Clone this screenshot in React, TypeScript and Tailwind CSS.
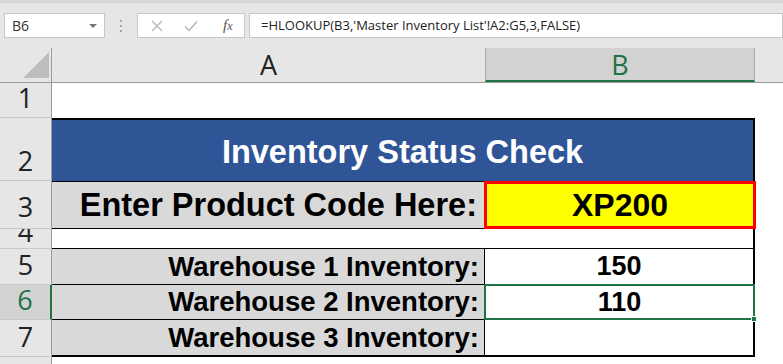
import React from "react";

const sans = { fontFamily: '"Liberation Sans", Arial, sans-serif' };

function RowHead({ n, active, pb = "pb-[6px]", clip }: { n: number; active?: boolean; pb?: string; clip?: boolean }) {
    return (
        <div
            className={`w-[52px] shrink-0 flex items-end justify-center border-b border-[#c8c8c8] ${clip ? "overflow-hidden" : ""} ${pb} ${active
                ? "bg-[#d2d2d2] text-[#217346] border-r-2 border-r-[#217346]"
                : "bg-[#e6e6e6] text-[#222] border-r border-r-[#9b9b9b]"
                }`}
        >
            <span className="text-[27px] leading-none font-['Open_Sans',sans-serif]">{n}</span>
        </div>
    );
}

export default function App() {
    return (
        <div className="w-[783px] h-[364px] overflow-hidden bg-[#e6e6e6] border-t-[3px] border-[#d6d6d6] flex flex-col">
            {/* Formula bar */}
            <div className="mt-[10px] h-[25px] flex items-stretch font-['Open_Sans',sans-serif]">
                <div className="ml-[4px] w-[101px] bg-white border border-[#c6c6c6] flex items-center justify-between pl-[7px] pr-[7px]">
                    <span className="text-[14px] text-[#333]">B6</span>
                    <span className="w-0 h-0 border-l-[4px] border-r-[4px] border-t-[4px] border-l-transparent border-r-transparent border-t-[#777]" />
                </div>
                <div className="w-[32px] flex flex-col items-center justify-center gap-[3px]">
                    <span className="w-[2px] h-[2px] bg-[#aaa]" />
                    <span className="w-[2px] h-[2px] bg-[#aaa]" />
                    <span className="w-[2px] h-[2px] bg-[#aaa]" />
                </div>
                <div className="w-[108px] bg-white border border-[#c6c6c6] flex items-center pl-[13px]">
                    <svg width="12" height="12" viewBox="0 0 12 12" className="shrink-0">
                        <path d="M1 1 L11 11 M11 1 L1 11" stroke="#b4b4b4" strokeWidth="1.3" fill="none" />
                    </svg>
                    <svg width="14" height="12" viewBox="0 0 14 12" className="ml-[21px] shrink-0">
                        <path d="M1 6.5 L5 10.5 L13 1.5" stroke="#b4b4b4" strokeWidth="1.5" fill="none" />
                    </svg>
                    <span className="ml-[25px] text-[15px] italic text-[#555] font-['Liberation_Serif',serif] leading-none">
                        f<span className="text-[12px]">x</span>
                    </span>
                </div>
                <div className="ml-[4px] flex-1 bg-white border border-[#c6c6c6] flex items-center pl-[11px]">
                    <span className="text-[13px] text-[#222] whitespace-nowrap">
                        =HLOOKUP(B3,'Master Inventory List'!A2:G5,3,FALSE)
                    </span>
                </div>
            </div>

            {/* Column headers */}
            <div className="mt-[10px] h-[35px] flex border-b border-[#9b9b9b] font-['Open_Sans',sans-serif] text-[27px] leading-none">
                <div className="w-[52px] shrink-0 border-r border-[#9b9b9b] flex items-end justify-end pr-[2px] pb-[4px]">
                    <div className="w-[26px] h-[26px] bg-[#bdbdbd] [clip-path:polygon(100%_0,100%_100%,0_100%)]" />
                </div>
                <div className="w-[433px] shrink-0 flex items-end justify-center pb-[4px] text-[#222]">A</div>
                <div className="w-[270px] shrink-0 bg-[#d2d2d2] border-x border-[#ababab] border-b-2 border-b-[#217346] flex items-end justify-center pb-[2px] text-[#217346]">
                    B
                </div>
                <div className="flex-1" />
            </div>

            {/* Grid */}
            <div className="flex-1 flex flex-col bg-white" style={sans}>
                {/* Row 1 */}
                <div className="h-[35px] flex">
                    <RowHead n={1} />
                    <div className="w-[703px] bg-white" />
                </div>
                {/* Row 2 */}
                <div className="h-[63px] flex">
                    <RowHead n={2} />
                    <div className="w-[703px] bg-[#2f5597] border-t-2 border-r-2 border-black flex items-center justify-center pt-[4px]">
                        <span className="text-white font-bold text-[32.5px]">Inventory Status Check</span>
                    </div>
                </div>
                {/* Row 3 */}
                <div className="h-[48px] flex">
                    <RowHead n={3} pb="pb-[8px]" />
                    <div className="w-[432px] bg-[#d9d9d9] border-t border-b border-black flex items-center justify-end pr-[7px]">
                        <span className="font-bold text-[32.5px] text-black">Enter Product Code Here:</span>
                    </div>
                    <div className="w-[272px] -mr-[1px] bg-[#ffff00] border-[3px] border-[#ff0000] flex items-center justify-center">
                        <span className="font-bold text-[32px] text-black">XP200</span>
                    </div>
                </div>
                {/* Row 4 */}
                <div className="h-[20px] flex">
                    <RowHead n={4} pb="pb-[3px]" clip />
                    <div className="w-[703px] bg-white border-b border-r-2 border-black" />
                </div>
                {/* Row 5 */}
                <div className="h-[36px] flex">
                    <RowHead n={5} />
                    <div className="w-[433px] bg-[#d9d9d9] border-b border-r border-black flex items-center justify-end pr-[5px]">
                        <span className="font-bold text-[27.5px] text-black">Warehouse 1 Inventory:</span>
                    </div>
                    <div className="w-[270px] bg-white border-b border-r-2 border-black flex items-center justify-center">
                        <span className="font-bold text-[27px] text-black">150</span>
                    </div>
                </div>
                {/* Row 6 */}
                <div className="h-[35px] flex">
                    <RowHead n={6} active />
                    <div className="w-[432px] bg-[#d9d9d9] border-b border-black flex items-center justify-end pr-[5px]">
                        <span className="font-bold text-[27.5px] text-black">Warehouse 2 Inventory:</span>
                    </div>
                    <div className="relative w-[271px] -mt-[1px] bg-white border-2 border-[#217346] flex items-center justify-center">
                        <span className="font-bold text-[27px] text-black">110</span>
                        <span className="absolute -right-[4px] -bottom-[4px] w-[6px] h-[6px] bg-[#217346] border border-white" />
                    </div>
                </div>
                {/* Row 7 */}
                <div className="h-[37px] flex">
                    <RowHead n={7} />
                    <div className="w-[433px] bg-[#d9d9d9] border-b-2 border-r border-black flex items-center justify-end pr-[5px]">
                        <span className="font-bold text-[27.5px] text-black">Warehouse 3 Inventory:</span>
                    </div>
                    <div className="w-[270px] bg-white border-b-2 border-r-2 border-black" />
                </div>
                {/* Row 8 */}
                <div className="flex-1 flex">
                    <div className="w-[52px] shrink-0 bg-[#e6e6e6] border-r border-[#9b9b9b]" />
                    <div className="flex-1 bg-white" />
                </div>
            </div>
        </div>
    );
}
